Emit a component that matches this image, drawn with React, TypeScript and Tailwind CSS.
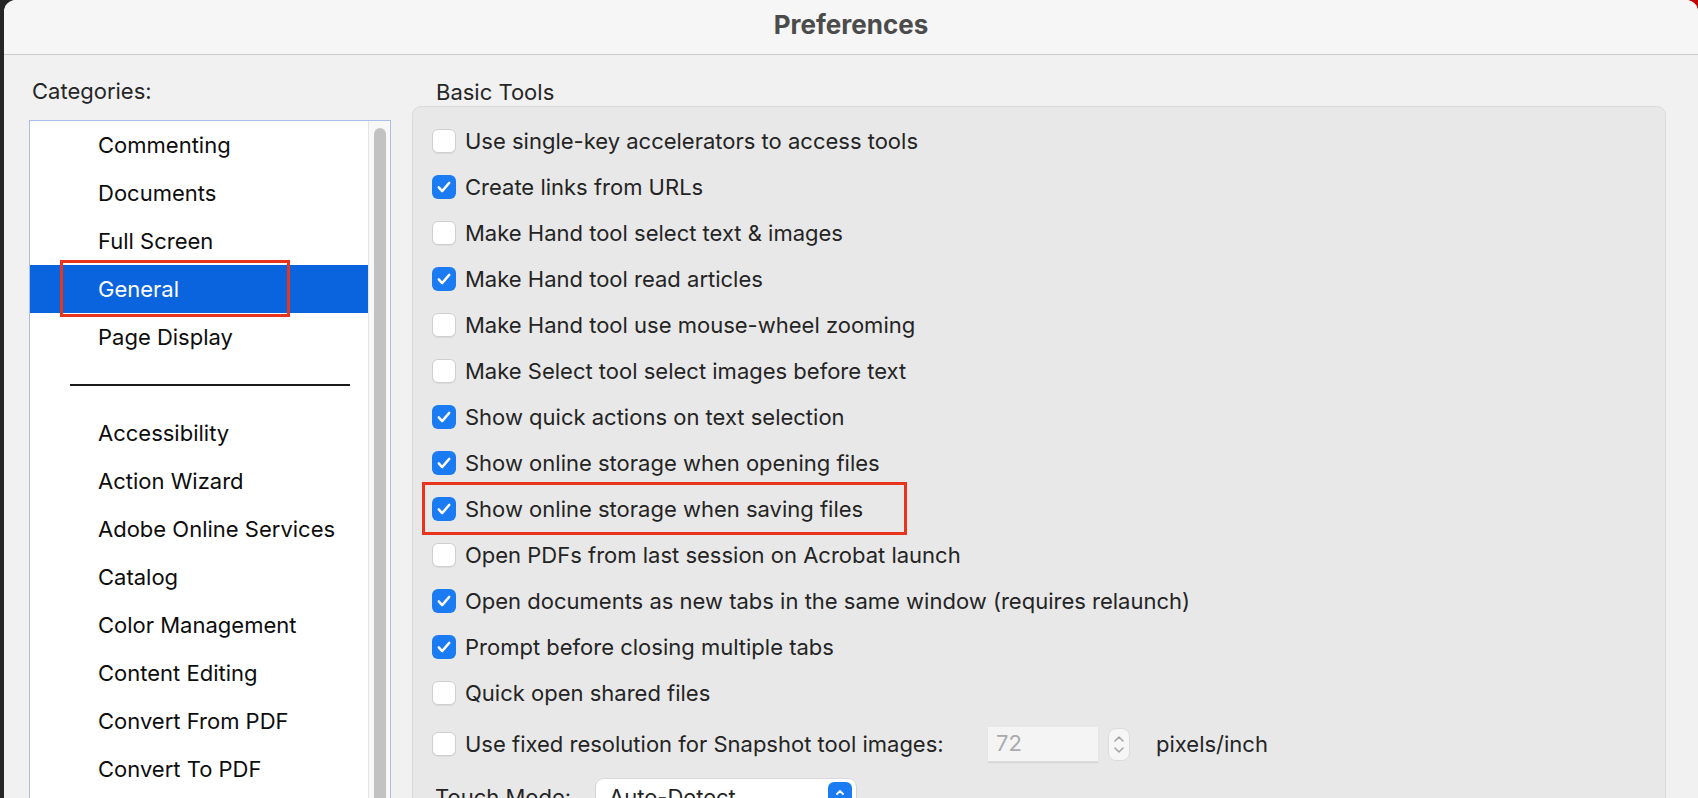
import React from "react";

const topCategories = ["Commenting", "Documents", "Full Screen", "General", "Page Display"];
const moreCategories = [
  "Accessibility",
  "Action Wizard",
  "Adobe Online Services",
  "Catalog",
  "Color Management",
  "Content Editing",
  "Convert From PDF",
  "Convert To PDF",
];

const options: { label: string; checked: boolean; marked?: boolean }[] = [
  { label: "Use single-key accelerators to access tools", checked: false },
  { label: "Create links from URLs", checked: true },
  { label: "Make Hand tool select text & images", checked: false },
  { label: "Make Hand tool read articles", checked: true },
  { label: "Make Hand tool use mouse-wheel zooming", checked: false },
  { label: "Make Select tool select images before text", checked: false },
  { label: "Show quick actions on text selection", checked: true },
  { label: "Show online storage when opening files", checked: true },
  { label: "Show online storage when saving files", checked: true, marked: true },
  { label: "Open PDFs from last session on Acrobat launch", checked: false },
  { label: "Open documents as new tabs in the same window (requires relaunch)", checked: true },
  { label: "Prompt before closing multiple tabs", checked: true },
  { label: "Quick open shared files", checked: false },
];

function Checkbox({ checked }: { checked: boolean }) {
  if (checked) {
    return (
      <div className="w-[24px] h-[24px] shrink-0 rounded-[6px] bg-[#1a7bf2] flex items-center justify-center">
        <svg width="18" height="18" viewBox="0 0 24 24" fill="none">
          <path d="M5 12.5l4.5 5L19 6.5" stroke="white" strokeWidth="3.2" strokeLinecap="round" strokeLinejoin="round" />
        </svg>
      </div>
    );
  }
  return (
    <div className="w-[24px] h-[24px] shrink-0 rounded-[6px] bg-white border border-[#cfcfcf] shadow-[0_1px_1px_rgba(0,0,0,0.06)]" />
  );
}

function CategoryRow({ name, selected }: { name: string; selected?: boolean }) {
  return (
    <div className={`relative h-[48px] flex items-center pl-[68px] ${selected ? "bg-[#0a64de] text-white" : "text-[#0d0d0d]"}`}>
      <span className="text-[22px] leading-none">{name}</span>
      {selected && (
        <div className="absolute left-[30px] top-[-5px] w-[230px] h-[57px] border-[3px] border-[#e8341c]" />
      )}
    </div>
  );
}

export default function App() {
  return (
    <div className="relative w-[1698px] h-[798px] overflow-hidden bg-[#262626] font-[Inter,sans-serif]">
      <div className="absolute top-0 right-0 w-[16px] h-[16px] bg-[#c40000]" />
      <div className="relative ml-[4px] h-full rounded-t-[12px] overflow-hidden bg-[#f1f1f1] flex flex-col">
        {/* title bar */}
        <div className="h-[55px] shrink-0 bg-[#f6f6f6] border-b border-[#cbcbcb] flex items-center justify-center">
          <span className="text-[26px] font-bold text-[#4b4b4b] leading-none -mt-[4px]">Preferences</span>
        </div>

        <div className="flex flex-1 min-h-0">
          {/* categories */}
          <div className="ml-[25px] w-[362px] shrink-0 flex flex-col">
            <div className="pt-[22px] pb-[15px] pl-[3px] h-[65px] text-[22px] leading-[28px] text-[#262626]">Categories:</div>
            <div className="flex-1 flex border border-[#a9bfe9] bg-white">
              <div className="flex-1">
                {topCategories.map((c) => (
                  <CategoryRow key={c} name={c} selected={c === "General"} />
                ))}
                <div className="h-[48px] flex items-center pl-[40px]">
                  <div className="w-[280px] h-[2px] bg-[#1a1a1a]" />
                </div>
                {moreCategories.map((c) => (
                  <CategoryRow key={c} name={c} />
                ))}
              </div>
              <div className="w-[22px] shrink-0 bg-[#f8f8f8] border-l border-[#e4e4e4] pt-[7px] pl-[5px]">
                <div className="w-[12px] h-[900px] rounded-full bg-[#c2c2c2]" />
              </div>
            </div>
          </div>

          {/* basic tools */}
          <div className="ml-[21px] w-[1254px] shrink-0 flex flex-col">
            <div className="pt-[23px] pl-[24px] h-[51px] text-[22px] leading-[28px] text-[#262626]">Basic Tools</div>
            <div className="flex-1 rounded-t-[9px] border border-[#dadada] bg-[#e8e8e8] pt-[11px] pl-[19px] text-[#242424]">
              {options.map((o) => (
                <div key={o.label} className="relative h-[46px] flex items-center">
                  <Checkbox checked={o.checked} />
                  <span className="ml-[9px] text-[22px] leading-none">{o.label}</span>
                  {o.marked && (
                    <div className="absolute left-[-10px] top-[-4px] w-[485px] h-[53px] border-[3px] border-[#e8341c]" />
                  )}
                </div>
              ))}

              <div className="h-[56px] flex items-center">
                <Checkbox checked={false} />
                <span className="ml-[9px] w-[523px] text-[22px] leading-none">Use fixed resolution for Snapshot tool images:</span>
                <div className="w-[110px] h-[35px] bg-[#f4f4f4] border-b border-[#dedede] shadow-[0_1px_1px_rgba(0,0,0,0.08)] flex items-center pl-[8px] text-[22px] text-[#ababab]">
                  72
                </div>
                <div className="ml-[10px] w-[22px] h-[33px] rounded-[8px] bg-[#f6f6f6] border border-[#dcdcdc] flex flex-col items-center justify-center gap-[3px]">
                  <svg width="12" height="8" viewBox="0 0 12 8" fill="none">
                    <path d="M2 6l4-4 4 4" stroke="#a6a6a6" strokeWidth="1.6" strokeLinecap="round" strokeLinejoin="round" />
                  </svg>
                  <svg width="12" height="8" viewBox="0 0 12 8" fill="none">
                    <path d="M2 2l4 4 4-4" stroke="#a6a6a6" strokeWidth="1.6" strokeLinecap="round" strokeLinejoin="round" />
                  </svg>
                </div>
                <span className="ml-[26px] text-[22px] leading-none">pixels/inch</span>
              </div>

              <div className="h-[46px] flex items-center pt-[4px]">
                <span className="ml-[3px] w-[161px] text-[22px] leading-none">Touch Mode:</span>
                <div className="w-[260px] h-[36px] rounded-[8px] bg-white shadow-[0_0_0_1px_rgba(0,0,0,0.06),0_1px_2px_rgba(0,0,0,0.1)] flex items-center justify-between pl-[13px] pr-[4px]">
                  <span className="text-[22px] leading-none">Auto-Detect</span>
                  <div className="w-[24px] h-[30px] rounded-[6px] bg-[#1a7bf2] flex flex-col items-center justify-center gap-[2px]">
                    <svg width="10" height="7" viewBox="0 0 10 7" fill="none">
                      <path d="M2 5l3-3 3 3" stroke="white" strokeWidth="1.8" strokeLinecap="round" strokeLinejoin="round" />
                    </svg>
                    <svg width="10" height="7" viewBox="0 0 10 7" fill="none">
                      <path d="M2 2l3 3 3-3" stroke="white" strokeWidth="1.8" strokeLinecap="round" strokeLinejoin="round" />
                    </svg>
                  </div>
                </div>
              </div>
            </div>
          </div>
        </div>
      </div>
    </div>
  );
}
